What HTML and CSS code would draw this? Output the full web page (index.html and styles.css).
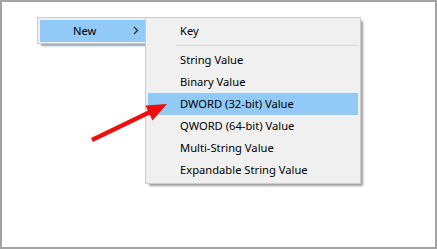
FILE: index.html
```html
<!DOCTYPE html>
<html>
<head>
<meta charset="utf-8">
<link rel="stylesheet" href="styles.css">
</head>
<body>
<div class="frame">
  <div class="menu menu-main">
    <div class="item item-new active">
      <span class="label">New</span>
      <svg class="chev" width="6" height="9" viewBox="0 0 6 9"><polyline points="1,1 4.5,4.5 1,8" fill="none" stroke="#333" stroke-width="1.4"/></svg>
    </div>
  </div>
  <div class="menu menu-sub">
    <div class="item">Key</div>
    <div class="sep"></div>
    <div class="item">String Value</div>
    <div class="item">Binary Value</div>
    <div class="item active">DWORD (32-bit) Value</div>
    <div class="item">QWORD (64-bit) Value</div>
    <div class="item">Multi-String Value</div>
    <div class="item">Expandable String Value</div>
  </div>
  <svg class="arrow" width="437" height="249" viewBox="0 0 437 249">
    <line x1="92" y1="140" x2="152" y2="111" stroke="#f20d0d" stroke-width="4.2" stroke-linecap="butt"/>
    <polygon points="167,104 145.5,105.5 152.5,120.5" fill="#f20d0d"/>
  </svg>
</div>
</body>
</html>
```

FILE: styles.css
```css
html, body {
  margin: 0;
  padding: 0;
  background: #fff;
}
.frame {
  position: relative;
  width: 437px;
  height: 249px;
  box-sizing: border-box;
  border: 2px solid #a3a3a3;
  background: #fff;
  overflow: hidden;
  font-family: "Noto Sans", "Open Sans", sans-serif;
  font-size: 11.2px;
  color: #000;
}
.menu {
  position: absolute;
  box-sizing: border-box;
  background: #f0f0f0;
  border: 1px solid #cccccc;
  padding: 2px;
  box-shadow: 3px 3px 2px -1px rgba(0, 0, 0, 0.38);
}
.menu-main {
  left: 35px;
  top: 15px;
  width: 112px;
  padding-bottom: 1px;
}
.menu-sub {
  left: 143px;
  top: 15px;
  width: 216px;
}
.item {
  height: 22px;
  line-height: 22px;
  padding-left: 32px;
  white-space: nowrap;
}
.item.active {
  background: #91c9f7;
}
.item-new {
  display: flex;
  align-items: center;
  padding-left: 33px;
  padding-right: 7px;
}
.item-new .label {
  flex: 1;
}
.chev {
  display: block;
  margin-top: -1px;
}
.sep {
  height: 7px;
  margin-left: 28px;
  display: flex;
  align-items: center;
}
.sep::before {
  content: "";
  flex: 1;
  height: 1px;
  background: #d7d7d7;
}
.arrow {
  position: absolute;
  left: -2px;
  top: -2px;
  pointer-events: none;
}
```
